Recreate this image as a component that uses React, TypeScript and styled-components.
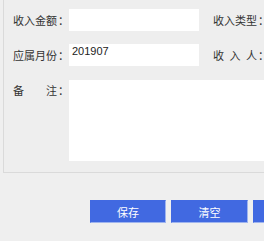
import styled, { createGlobalStyle } from 'styled-components';

const GlobalStyle = createGlobalStyle`
  html, body {
    margin: 0;
    padding: 0;
    background: #efefef;
    overflow: hidden;
  }
  body {
    font-family: "Liberation Sans", "Noto Sans CJK SC", sans-serif;
    font-size: 11px;
    color: #333;
  }
`;

const Page = styled.div`
  width: 420px;
  padding-left: 3px;
`;

const Panel = styled.div`
  background: #eeeeee;
  border-left: 1px solid #dadada;
  border-bottom: 1px solid #dadada;
  padding: 9px 0 11px 9px;
  display: grid;
  grid-template-columns: 56px 130px 14px 56px 130px;
  grid-template-rows: 22px 22px 82px;
  row-gap: 13px;
  align-items: center;
`;

const Label = styled.label<{ $top?: boolean }>`
  font-family: "Noto Sans CJK SC", sans-serif;
  font-size: 11px;
  line-height: 14px;
  color: #333;
  white-space: nowrap;
  align-self: ${(p) => (p.$top ? 'start' : 'center')};
  margin-top: ${(p) => (p.$top ? '4px' : '0')};
`;

const Colon = styled.span`
  margin-left: 1px;
`;

const Input = styled.input`
  box-sizing: border-box;
  width: 130px;
  height: 22px;
  border: none;
  background: #fff;
  padding: 0 3px 8px;
  font-family: "Liberation Sans", sans-serif;
  font-size: 11px;
  color: #222;
  outline: none;
`;

const Spacer = styled.div``;

const TextArea = styled.textarea`
  grid-column: 2 / 6;
  align-self: end;
  box-sizing: border-box;
  height: 81px;
  border: none;
  background: #fff;
  resize: none;
  outline: none;
`;

const Actions = styled.div`
  display: flex;
  gap: 5px;
  padding: 27px 0 0 87px;
`;

const Button = styled.button<{ $width: number }>`
  box-sizing: border-box;
  width: ${(p) => p.$width}px;
  height: 23px;
  background: #4169e1;
  border: 1px solid #9fb4ee;
  border-top-color: #4169e1;
  border-left-color: #4169e1;
  color: #fff;
  font-family: "Noto Sans CJK SC", sans-serif;
  font-size: 11px;
  padding: 0;
  cursor: pointer;
`;

export default function App() {
  return (
    <Page>
      <GlobalStyle />
      <Panel>
        <Label>收入金额<Colon>：</Colon></Label>
        <Input />
        <Spacer />
        <Label>收入类型<Colon>：</Colon></Label>
        <Input />

        <Label>应属月份<Colon>：</Colon></Label>
        <Input defaultValue="201907" />
        <Spacer />
        <Label>收&ensp;入&ensp;人<Colon>：</Colon></Label>
        <Input />

        <Label $top>备&emsp;&emsp;注<Colon>：</Colon></Label>
        <TextArea />
      </Panel>
      <Actions>
        <Button $width={76}>保存</Button>
        <Button $width={77}>清空</Button>
        <Button $width={76}>关闭</Button>
      </Actions>
    </Page>
  );
}
